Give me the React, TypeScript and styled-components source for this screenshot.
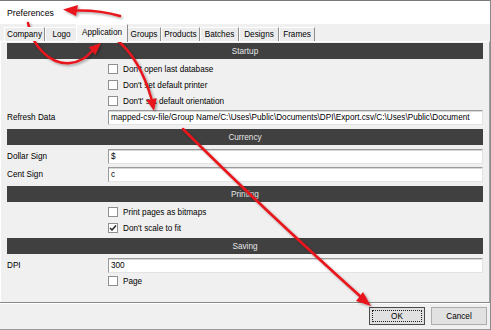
import styled, { createGlobalStyle } from "styled-components";

const GlobalStyle = createGlobalStyle`
  html, body {
    margin: 0;
    padding: 0;
    background: #f0f0f0;
  }
  body {
    font-family: "Liberation Sans", Arial, sans-serif;
    font-size: 8.2px;
    color: #000;
  }
  * {
    box-sizing: border-box;
  }
`;

const Window = styled.div`
  position: relative;
  width: 491px;
  height: 330px;
  background: #f0f0f0;
  border-top: 1px solid #7a7a7a;
  border-right: 1px solid #8a8a8a;
  border-bottom: 1px solid #9a9a9a;
  display: flex;
  flex-direction: column;
  overflow: hidden;
`;

const TitleBar = styled.div`
  height: 23px;
  flex: none;
  background: #fff;
  padding-left: 7px;
  display: flex;
  align-items: center;
  font-size: 8.7px;
`;

const TabStrip = styled.div`
  height: 17px;
  flex: none;
  display: flex;
  align-items: flex-end;
  padding-left: 4px;
  position: relative;
  z-index: 1;
`;

const Tab = styled.div<{ $active?: boolean; $w: number }>`
  width: ${({ $active, $w }) => ($active ? $w + 3 : $w)}px;
  height: ${({ $active }) => ($active ? "18px" : "14px")};
  margin: ${({ $active }) => ($active ? "0 -1px -1px -2px" : "0")};
  padding-bottom: ${({ $active }) => ($active ? "3px" : "0")};
  display: flex;
  align-items: center;
  justify-content: center;
  background: ${({ $active }) => ($active ? "#f4f4f4" : "#ececec")};
  border-top: 1px solid #fff;
  border-left: 1px solid #fff;
  border-right: 1px solid #8d8d8d;
  position: relative;
  z-index: ${({ $active }) => ($active ? 2 : 1)};
  white-space: nowrap;
`;

const Panel = styled.div`
  flex: 1;
  border-top: 1px solid #fff;
  border-left: 1px solid #fff;
  border-right: 1px solid #a0a0a0;
  padding: 1px 6px 0;
  display: flex;
  flex-direction: column;
`;

const Header = styled.div`
  height: 16px;
  flex: none;
  background: #404040;
  color: #e6e6e6;
  display: flex;
  align-items: center;
  justify-content: center;
`;

const Body = styled.div<{ $pad: string }>`
  padding: ${({ $pad }) => $pad};
  display: flex;
  flex-direction: column;
`;

const CheckRow = styled.div`
  height: 16px;
  padding-left: 101px;
  display: flex;
  align-items: center;
  gap: 5px;
`;

const Box = styled.span`
  width: 10px;
  height: 10px;
  background: #fff;
  border: 1px solid #8f8f8f;
  display: flex;
  align-items: center;
  justify-content: center;
`;

const FieldRow = styled.div<{ $mt?: number }>`
  height: 15px;
  margin-top: ${({ $mt }) => $mt ?? 0}px;
  display: grid;
  grid-template-columns: 101px 1fr;
  align-items: center;
`;

const Input = styled.div`
  height: 15px;
  background: #fff;
  border-top: 1px solid #9a9a9a;
  border-left: 1px solid #9a9a9a;
  border-bottom: 1px solid #e3e3e3;
  border-right: 1px solid #e3e3e3;
  box-shadow: inset 0 1px 0 #d8d8d8;
  padding-left: 2px;
  display: flex;
  align-items: center;
  white-space: nowrap;
  overflow: hidden;
`;

const ButtonBar = styled.div`
  height: 27px;
  flex: none;
  border-top: 1px solid #8a8a8a;
  box-shadow: inset 0 1px 0 #fff;
  padding: 4px 3px 0 0;
  display: flex;
  justify-content: flex-end;
  align-items: flex-start;
  gap: 6px;
`;

const Button = styled.div<{ $default?: boolean }>`
  width: 56px;
  height: 18px;
  background: #e1e1e1;
  border: 1px solid ${({ $default }) => ($default ? "#4a4a4a" : "#adadad")};
  display: flex;
  align-items: center;
  justify-content: center;
  outline: ${({ $default }) => ($default ? "1px dotted #222" : "none")};
  outline-offset: -4px;
`;

const Overlay = styled.svg`
  position: absolute;
  left: 0;
  top: 0;
  pointer-events: none;
`;

const Check = ({ checked, label }: { checked?: boolean; label: string }) => (
  <CheckRow>
    <Box>
      {checked && (
        <svg width="8" height="8" viewBox="0 0 8 8">
          <path d="M1 4 L3 6 L7 1.5" fill="none" stroke="#222" strokeWidth="1.5" />
        </svg>
      )}
    </Box>
    <span>{label}</span>
  </CheckRow>
);

const Field = ({ label, value, mt }: { label: string; value: string; mt?: number }) => (
  <FieldRow $mt={mt}>
    <span>{label}</span>
    <Input>{value}</Input>
  </FieldRow>
);

const tabs = [
  { name: "Company", w: 41 },
  { name: "Logo", w: 33 },
  { name: "Application", w: 49 },
  { name: "Groups", w: 34 },
  { name: "Products", w: 39 },
  { name: "Batches", w: 39 },
  { name: "Designs", w: 40 },
  { name: "Frames", w: 36 },
];

const red = "#e8171d";

const Arrows = () => (
  <Overlay width="491" height="330" viewBox="0 0 491 330">
    <defs>
      <filter id="sh" x="-20%" y="-20%" width="140%" height="140%">
        <feDropShadow dx="1.5" dy="1.5" stdDeviation="1" floodColor="#000" floodOpacity="0.35" />
      </filter>
    </defs>
    <g filter="url(#sh)" fill={red} stroke={red} strokeLinecap="round">
      <path d="M120 15 Q100 9 76 9.5" fill="none" strokeWidth="2.5" />
      <polygon points="63,8.5 78,4 76,15" stroke="none" />

      <path d="M28 22 C32 45 50 64 70 62 C80 61 88 55 92 50" fill="none" strokeWidth="2.5" />
      <polygon points="101,42 95.3,53.7 88.7,46.2" stroke="none" />

      <path d="M117 39 Q140 58 151.5 98" fill="none" strokeWidth="2.5" />
      <polygon points="154,110 156.6,97.2 146.6,99.3" stroke="none" />

      <path d="M183 128 Q260 205 361 296" fill="none" strokeWidth="2.5" />
      <polygon points="371,305 356,300 363,291" stroke="none" />
    </g>
  </Overlay>
);

export default function App() {
  return (
    <>
      <GlobalStyle />
      <Window>
        <TitleBar>Preferences</TitleBar>
        <TabStrip>
          {tabs.map((t) => (
            <Tab key={t.name} $w={t.w} $active={t.name === "Application"}>
              {t.name}
            </Tab>
          ))}
        </TabStrip>
        <Panel>
          <Header>Startup</Header>
          <Body $pad="2px 0 4px">
            <Check label="Don't open last database" />
            <Check label="Don't set default printer" />
            <Check label="Don't' set default orientation" />
            <Field
              mt={1}
              label="Refresh Data"
              value="mapped-csv-file/Group Name/C:\Uses\Public\Documents\DPI\Export.csv/C:\Uses\Public\Document"
            />
          </Body>
          <Header>Currency</Header>
          <Body $pad="4px 0 4px">
            <Field label="Dollar Sign" value="$" />
            <Field mt={3} label="Cent Sign" value="c" />
          </Body>
          <Header>Printing</Header>
          <Body $pad="2px 0 2px">
            <Check label="Print pages as bitmaps" />
            <Check checked label="Don't scale to fit" />
          </Body>
          <Header>Saving</Header>
          <Body $pad="4px 0 0">
            <Field label="DPI" value="300" />
            <Check label="Page" />
          </Body>
        </Panel>
        <ButtonBar>
          <Button $default>OK</Button>
          <Button>Cancel</Button>
        </ButtonBar>
        <Arrows />
      </Window>
    </>
  );
}
